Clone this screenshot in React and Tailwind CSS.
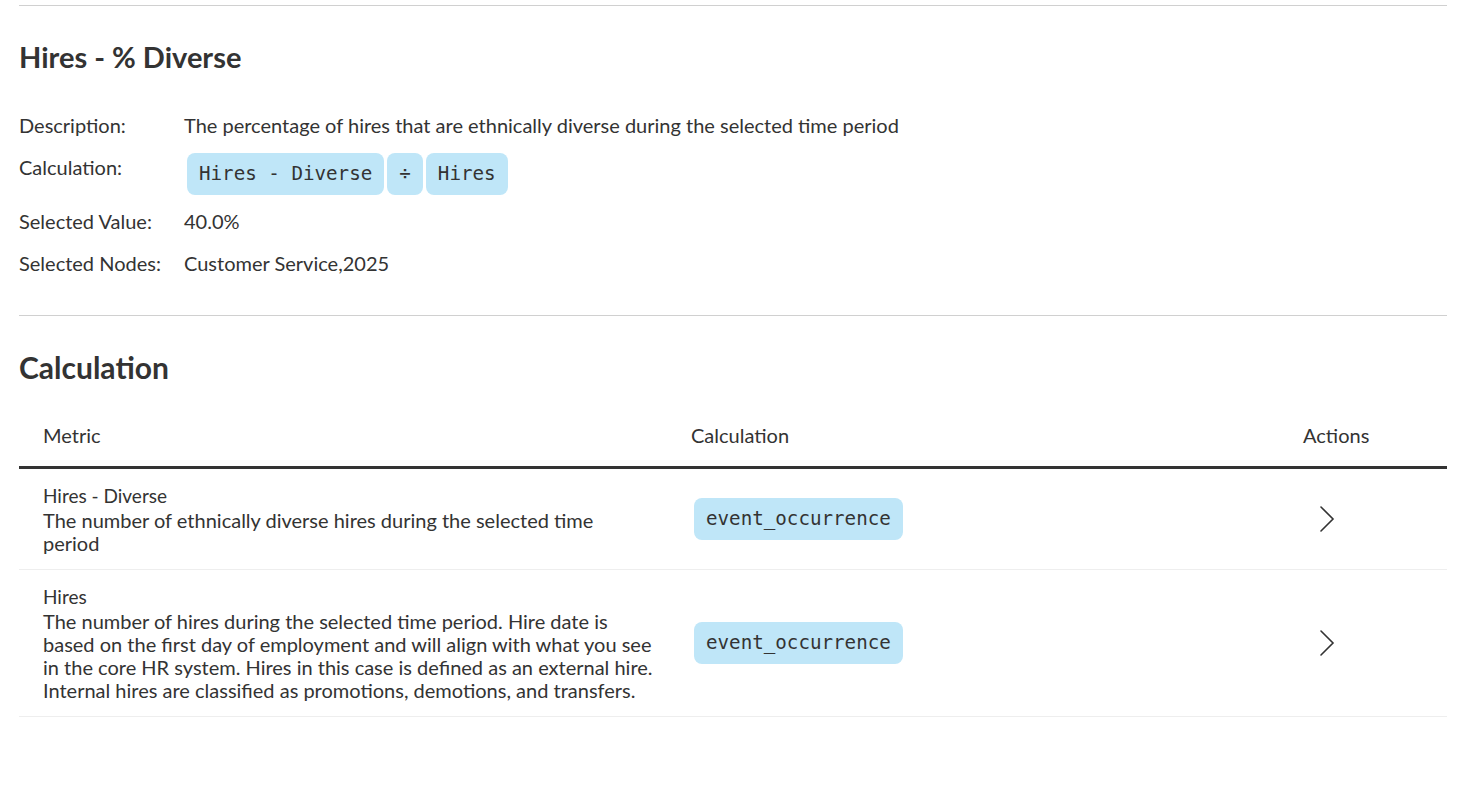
import React from "react";

function Pill({ children }) {
  return (
    <span className="ml-[3px] inline-flex h-[42px] items-center rounded-[8px] bg-[#bfe6f8] px-[12px] font-['DejaVu_Sans_Mono',monospace] text-[19.2px] text-[#333333]">
      {children}
    </span>
  );
}

function Chevron() {
  return (
    <button className="flex h-[48px] w-[48px] items-center justify-center">
      <svg width="16" height="28" viewBox="0 0 16 28" fill="none">
        <polyline points="2,2 14,14 2,26" stroke="#333333" strokeWidth="1.6" strokeLinecap="round" strokeLinejoin="miter" />
      </svg>
    </button>
  );
}

function InfoRow({ label, children, tall }) {
  return (
    <div className="grid grid-cols-[165px_1fr]">
      <div className="leading-[24px]">{label}</div>
      <div className={tall ? "h-[36px]" : "leading-[24px]"}>{children}</div>
    </div>
  );
}

const rows = [
  {
    title: "Hires - Diverse",
    lines: ["The number of ethnically diverse hires during the selected time", "period"],
  },
  {
    title: "Hires",
    lines: [
      "The number of hires during the selected time period. Hire date is",
      "based on the first day of employment and will align with what you see",
      "in the core HR system. Hires in this case is defined as an external hire.",
      "Internal hires are classified as promotions, demotions, and transfers.",
    ],
  },
];

export default function App() {
  return (
    <div className="min-h-screen bg-white pl-[19px] pr-[13px] pt-[5px] font-['Lato',sans-serif] text-[20px] text-[#333333]">
      <section className="border-t border-[#d0d0d0]">
        <h1 className="mt-[33px] text-[29px] font-bold leading-[36px] text-[#333333]">Hires - % Diverse</h1>
        <div className="mt-[38px] flex flex-col gap-[18px]">
          <InfoRow label="Description:">
            The percentage of hires that are ethnically diverse during the selected time period
          </InfoRow>
          <InfoRow label="Calculation:" tall>
            <div className="-mt-[2px] flex">
              <Pill>Hires - Diverse</Pill>
              <Pill>÷</Pill>
              <Pill>Hires</Pill>
            </div>
          </InfoRow>
          <InfoRow label="Selected Value:">40.0%</InfoRow>
          <InfoRow label="Selected Nodes:">Customer Service,2025</InfoRow>
        </div>
      </section>

      <section className="mt-[40px] border-t border-[#d0d0d0]">
        <h2 className="mt-[33px] text-[30px] font-bold leading-[36px] text-[#333333]">Calculation</h2>
        <div className="mt-[20px]">
          <div className="grid grid-cols-[648px_612px_1fr] border-b-[3px] border-[#333333] leading-[24px]">
            <div className="pb-[19px] pt-[18px] pl-[24px]">Metric</div>
            <div className="pb-[19px] pt-[18px] pl-[24px]">Calculation</div>
            <div className="pb-[19px] pt-[18px] pl-[24px]">Actions</div>
          </div>
          {rows.map((r) => (
            <div key={r.title} className="grid grid-cols-[648px_612px_1fr] border-b border-[#eeeeee]">
              <div className="py-[14px] pl-[24px]">
                <div className="text-[19px] leading-[26px]">{r.title}</div>
                <div className="leading-[23px]">
                  {r.lines.map((l, i) => (
                    <React.Fragment key={i}>
                      {l}
                      {i < r.lines.length - 1 && <br />}
                    </React.Fragment>
                  ))}
                </div>
              </div>
              <div className="flex items-center pl-[24px]">
                <Pill>event_occurrence</Pill>
              </div>
              <div className="flex items-center pl-[24px]">
                <Chevron />
              </div>
            </div>
          ))}
        </div>
      </section>
    </div>
  );
}
